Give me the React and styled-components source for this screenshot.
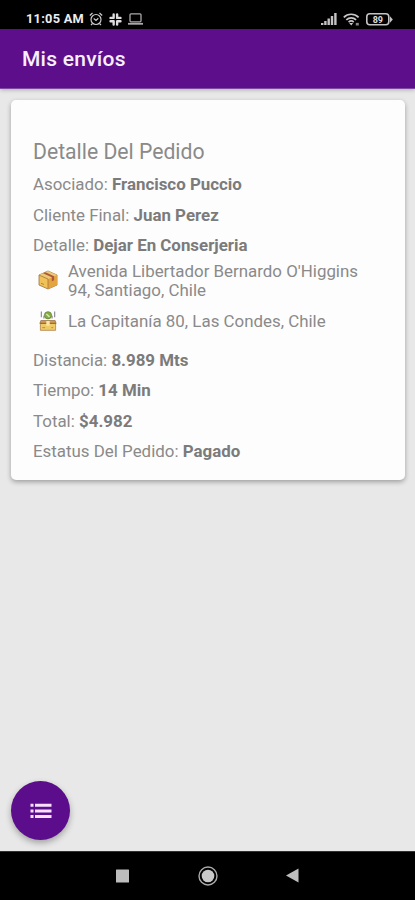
import React from "react";
import styled, { createGlobalStyle } from "styled-components";

const GlobalStyle = createGlobalStyle`
  * { box-sizing: border-box; }
  body { margin: 0; font-family: Roboto, sans-serif; background: #e8e8e8; }
`;

const Screen = styled.div`
  display: flex;
  flex-direction: column;
  width: 415px;
  height: 900px;
  overflow: hidden;
  background: #e8e8e8;
`;

const StatusBar = styled.div`
  display: flex;
  flex: 0 0 29px;
  align-items: center;
  padding: 9px 22px 0 26px;
  background: #000;
  color: #ededed;
`;

const Clock = styled.time`
  width: 58px;
  margin-right: 5px;
  font-size: 12.8px;
  line-height: 20px;
  font-weight: 700;
  letter-spacing: 0.25px;
  white-space: nowrap;
`;

const StatusIcons = styled.div`
  display: flex;
  align-items: center;
  gap: ${(p) => p.$gap}px;
  margin-left: ${(p) => (p.$end ? "auto" : "0")};

  svg { display: block; }
`;

const AppBar = styled.header`
  display: flex;
  flex: 0 0 60px;
  align-items: center;
  padding: 1px 22px 0;
  background: #5d0f8b;
  border-bottom: 1px solid #7d4a9f;
  box-shadow: 0 1px 4px rgba(0, 0, 0, 0.25);
  z-index: 1;
`;

const AppTitle = styled.h1`
  margin: 0;
  color: #f8effc;
  font-size: 21px;
  line-height: 28px;
  font-weight: 500;
  letter-spacing: 0.25px;
`;

const Content = styled.main`
  display: flex;
  flex: 1;
  flex-direction: column;
  justify-content: space-between;
  align-items: flex-start;
  padding: 11px 10px 11px 11px;
`;

const Card = styled.section`
  width: 100%;
  height: 380px;
  padding: 34px 22px 0;
  border-radius: 5px;
  background: #fdfdfd;
  box-shadow: 0 2px 5px rgba(0, 0, 0, 0.32);
  color: #8a8a8a;
`;

const CardTitle = styled.h2`
  margin: 0;
  font-size: 21.2px;
  line-height: 35px;
  font-weight: 400;
  letter-spacing: 0;
`;

const Field = styled.p`
  margin: 0;
  font-size: 16.9px;
  line-height: 30.5px;
  white-space: nowrap;

  b { color: #7b7b7b; font-weight: 700; }
`;

const Route = styled.div`
  display: flex;
  flex-direction: column;
  gap: 10px;
  padding: 1px 20px 12px 0;
`;

const Address = styled.div`
  display: grid;
  grid-template-columns: 29px 1fr;
  column-gap: 6px;
  align-items: center;
  font-size: 16.9px;
  line-height: 19.5px;

  svg { display: block; justify-self: center; margin-bottom: 2px; }
`;

const Fab = styled.button`
  display: grid;
  place-items: center;
  width: 59px;
  height: 59px;
  padding: 0;
  border: 0;
  border-radius: 50%;
  background: #5b0d8b;
  box-shadow: 0 3px 6px rgba(0, 0, 0, 0.3);
`;

const NavBar = styled.nav`
  display: flex;
  flex: 0 0 49px;
  align-items: center;
  justify-content: center;
  gap: 65px;
  padding: 0 0 1px 1px;
  border-top: 1px solid #333;
  background: #000;
`;

const NavButton = styled.button`
  display: grid;
  place-items: center;
  width: 20px;
  height: 22px;
  padding: 0;
  border: 0;
  background: none;
`;

const AlarmIcon = () => (
  <svg width="14" height="14" viewBox="0 0 14 14" fill="none" stroke="#ccc" strokeWidth="1.2">
    <circle cx="7" cy="7.5" r="5" />
    <path d="M.8 3.5 3.5 1M13.2 3.5 10.5 1M3.5 11.5 2 13M10.5 11.5 12 13M4.7 6.5 7 8.4 9.3 6.3" />
  </svg>
);

const SlackIcon = () => (
  <svg width="13" height="13" viewBox="0 0 12 12" stroke="#ddd" strokeWidth="2.2" strokeLinecap="round">
    <path d="M4.3 1.4v2.8M1.4 4.5h2.8M7.5 1.4v3.1M7.8 4.5h2.8M1.4 7.6h2.8M4.3 7.6v3M7.6 7.6h3M7.5 7.8v2.8" />
  </svg>
);

const LaptopIcon = () => (
  <svg width="15" height="12" viewBox="0 0 15 12" fill="none" stroke="#aaa" strokeWidth="1.3">
    <rect x="2" y=".8" width="11" height="8" rx="1" />
    <path d="M0 10.8h15" strokeWidth="1.8" />
  </svg>
);

const SignalIcon = () => (
  <svg width="16" height="12" viewBox="0 0 16 12" fill="#c4c4c4">
    <path d="M0 10h2.4v2H0zM3.2 8h2.4v4H3.2zM6.5 5.5h2.4V12H6.5zM9.8 3h2.4v9H9.8zM13.2 0h2.4v12h-2.4z" />
  </svg>
);

const WifiIcon = () => (
  <svg width="17" height="13" viewBox="0 0 17 13" fill="none" stroke="#c8c8c8" strokeWidth="1.7">
    <path d="M.8 4.3C4.9.2 11.3.2 15.6 4.3M3.3 6.8c2.9-2.7 7-2.7 9.8 0M5.6 9.1c1.6-1.4 3.7-1.4 5.1 0" />
    <path d="m6.2 10 2 2.6 2-2.6z" fill="#c8c8c8" stroke="none" />
    <path d="M12.8 11.2h3" stroke="#888" strokeWidth="2.6" />
  </svg>
);

const BatteryIcon = () => (
  <svg width="27" height="13" viewBox="0 0 27 13">
    <rect x=".8" y=".8" width="22" height="11" rx="3" fill="none" stroke="#c4c4c4" strokeWidth="1.6" />
    <path d="M24 3.2 26.8 6.5 24 9.8z" fill="#c4c4c4" />
    <text x="11.8" y="9.6" textAnchor="middle" fill="#ddd" fontFamily="Roboto, sans-serif" fontSize="9" fontWeight="700">89</text>
  </svg>
);

const PackageIcon = () => (
  <svg width="20" height="20" viewBox="0 0 20 20" strokeLinejoin="round">
    <path d="m1 5 9-4 9 4v10l-9 4-9-4z" fill="#f1c15a" stroke="#977443" strokeWidth=".8" />
    <path d="m10 9 9-4v10l-9 4z" fill="#e4a43f" />
    <path d="m1 5 9 4 9-4-9-4z" fill="#edc779" />
    <path d="m5 3.3 8.8 4v4l2.3-1V6.2L7.4 2.3z" fill="#ad573b" />
    <path d="M1.2 5.2 10 9v9.7M3 13.2l3 1.3" fill="none" stroke="#a67437" strokeWidth=".8" />
  </svg>
);

const DeliveryIcon = () => (
  <svg width="18" height="20" viewBox="0 0 18 21">
    <path d="M2 .5v6M16 .5v6M4.7 5v3M13.3 5v3" stroke="#888" strokeWidth="1.2" />
    <circle cx="9" cy="4.5" r="3.8" fill="#83ad43" stroke="#64813c" strokeWidth=".8" />
    <path d="m7.2 3.2 3.4 3" stroke="#d4e8a8" strokeWidth="1.5" />
    <path d="M1.5 10h15l1 3H.5z" fill="#d89c48" stroke="#896a43" strokeWidth=".7" />
    <path d="M1 13h16v7.3H1z" fill="#f1ca68" stroke="#a98044" strokeWidth=".8" />
    <path d="M.5 13h17" stroke="#856b4b" />
    <path d="M7.2 10.5h3.6v5H7.2z" fill="#fae5a4" />
    <path d="M3 17.5h3M12.5 17.5h2" stroke="#b58747" />
  </svg>
);

const ListIcon = () => (
  <svg width="22" height="16" viewBox="0 0 22 16" fill="#f8dfff">
    <path d="M.5.7h3v3h-3zM5 .7h16.5v3H5zM.5 6.4h3v3h-3zM5 6.4h16.5v3H5zM.5 12.1h3v3h-3zM5 12.1h16.5v3H5z" />
  </svg>
);

const route = [
  { Icon: PackageIcon, text: "Avenida Libertador Bernardo O'Higgins 94, Santiago, Chile" },
  { Icon: DeliveryIcon, text: "La Capitanía 80, Las Condes, Chile" },
];

const details = [
  ["Asociado", "Francisco Puccio"],
  ["Cliente Final", "Juan Perez"],
  ["Detalle", "Dejar En Conserjeria"],
];

const summary = [
  ["Distancia", "8.989 Mts"],
  ["Tiempo", "14 Min"],
  ["Total", "$4.982"],
  ["Estatus Del Pedido", "Pagado"],
];

const Fields = ({ items }) =>
  items.map(([label, value]) => (
    <Field key={label}>{label}: <b>{value}</b></Field>
  ));

export default function App() {
  return (
    <>
      <GlobalStyle />
      <Screen>
        <StatusBar>
          <Clock>11:05 AM</Clock>
          <StatusIcons $gap={6}><AlarmIcon /><SlackIcon /><LaptopIcon /></StatusIcons>
          <StatusIcons $gap={6} $end><SignalIcon /><WifiIcon /><BatteryIcon /></StatusIcons>
        </StatusBar>
        <AppBar><AppTitle>Mis envíos</AppTitle></AppBar>
        <Content>
          <Card>
            <CardTitle>Detalle Del Pedido</CardTitle>
            <Fields items={details} />
            <Route>
              {route.map(({ Icon, text }) => (
                <Address key={text}><Icon /><span>{text}</span></Address>
              ))}
            </Route>
            <Fields items={summary} />
          </Card>
          <Fab aria-label="Menú"><ListIcon /></Fab>
        </Content>
        <NavBar>
          <NavButton aria-label="Recientes">
            <svg width="14" height="14"><rect width="13" height="13" y=".5" rx=".5" fill="#bdbdbd" /></svg>
          </NavButton>
          <NavButton aria-label="Inicio">
            <svg width="20" height="20" viewBox="0 0 20 20">
              <circle cx="10" cy="10" r="9" fill="none" stroke="#aaa" strokeWidth="1.4" />
              <circle cx="10" cy="10" r="6.3" fill="#c8c8c8" />
            </svg>
          </NavButton>
          <NavButton aria-label="Atrás">
            <svg width="14" height="15"><path d="M12.5.5v14L0 7.5z" fill="#bdbdbd" /></svg>
          </NavButton>
        </NavBar>
      </Screen>
    </>
  );
}
